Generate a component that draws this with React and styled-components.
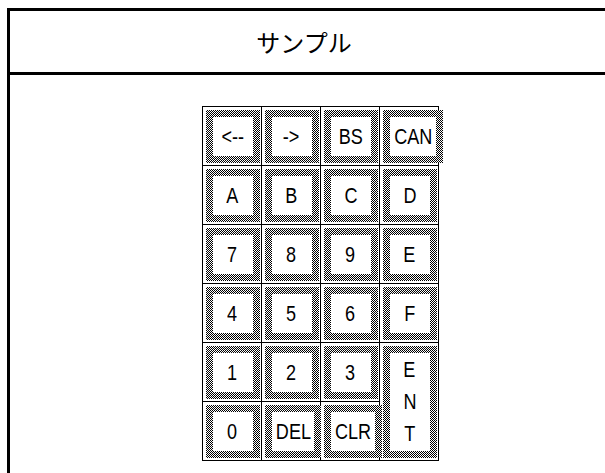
import React from "react";
import styled, { createGlobalStyle } from "styled-components";

const GlobalStyle = createGlobalStyle`
  body {
    margin: 0;
    background: #fff;
    font-family: "Liberation Sans", "Noto Sans CJK JP", sans-serif;
    overflow: hidden;
  }
`;

const Page = styled.div`
  padding: 8px 0 0 7px;
`;

const Frame = styled.div`
  width: 620px;
  border: 3px solid #000;
  display: flex;
  flex-direction: column;
`;

const Header = styled.div`
  height: 61px;
  display: flex;
  align-items: center;
  justify-content: center;
  padding-right: 32px;
  border-bottom: 3px solid #000;
  font-family: "Noto Sans CJK JP", sans-serif;
  font-size: 24px;
  color: #000;
`;

const Body = styled.div`
  padding: 31px 0 30px;
  display: flex;
  justify-content: center;
`;

const Keypad = styled.div`
  display: grid;
  grid-template-columns: repeat(4, 58px);
  grid-auto-rows: 58px;
  gap: 1px;
  padding: 1px;
  background: #000;
`;

const Cell = styled.div`
  background: #fff;
  padding: 3px 1px 2px 3px;
  display: flex;
  grid-row: span ${(p) => p.$rows || 1};
`;

const Key = styled.div`
  flex: 1;
  display: flex;
  padding: 7px;
  background: repeating-conic-gradient(#000 0% 25%, #fff 0% 50%) 0 0 / 2px 2px;
`;

const Face = styled.div`
  flex: 1;
  background: #fff;
  display: flex;
  flex-direction: ${(p) => (p.$vertical ? "column" : "row")};
  align-items: center;
  justify-content: center;
  gap: ${(p) => (p.$vertical ? "10px" : "0")};
`;

const Label = styled.span`
  font-size: 22px;
  line-height: 1;
  color: #000;
  display: inline-block;
  transform: scaleX(0.82);
  white-space: nowrap;
`;

const keys = [
  ["<--"], ["->"], ["BS"], ["CAN"],
  ["A"], ["B"], ["C"], ["D"],
  ["7"], ["8"], ["9"], ["E"],
  ["4"], ["5"], ["6"], ["F"],
  ["1"], ["2"], ["3"], ["ENT", 2, true],
  ["0"], ["DEL"], ["CLR"],
];

export default function App() {
  return (
    <Page>
      <GlobalStyle />
      <Frame>
        <Header>サンプル</Header>
        <Body>
          <Keypad>
            {keys.map(([text, rows, vertical]) => (
              <Cell key={text} $rows={rows}>
                <Key>
                  <Face $vertical={vertical}>
                    {vertical ? (
                      text.split("").map((ch) => <Label key={ch}>{ch}</Label>)
                    ) : (
                      <Label>{text}</Label>
                    )}
                  </Face>
                </Key>
              </Cell>
            ))}
          </Keypad>
        </Body>
      </Frame>
    </Page>
  );
}
